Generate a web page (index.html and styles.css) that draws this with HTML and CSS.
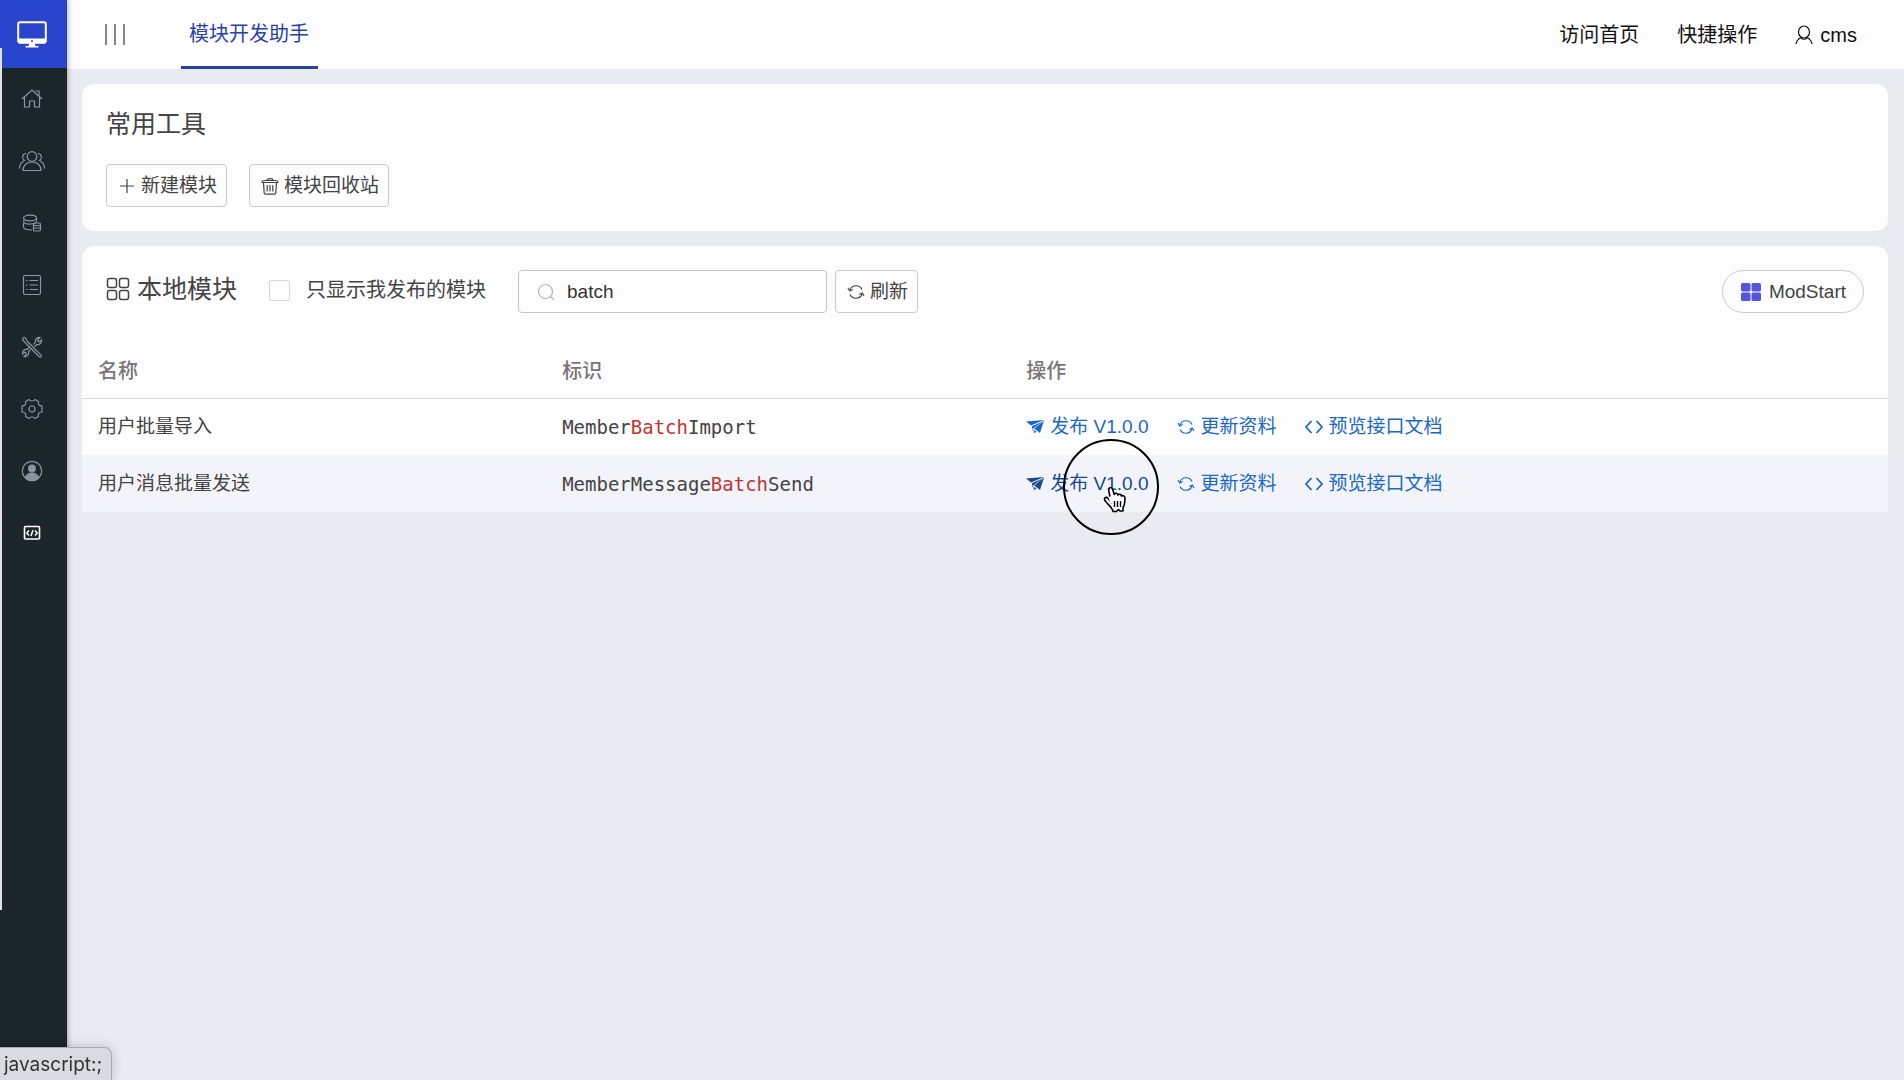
FILE: index.html
```html
<!DOCTYPE html>
<html lang="zh-CN">
<head>
<meta charset="utf-8">
<title>模块开发助手</title>
<link rel="stylesheet" href="styles.css">
</head>
<body>
<svg class="defs" aria-hidden="true">
  <symbol id="i-refresh" viewBox="0 0 18 18"><path d="M3 7a6.5 6.5 0 0 1 12-.5M15 11a6.500 6.500 0 0 1-12 .5"/><path d="M1 5l1.700 3 3-1.500M17 13l-1.700-3-3 1.500"/></symbol>
  <symbol id="i-plane" viewBox="0 0 18 18"><path fill="currentColor" stroke="none" d="M0 3.500 18 2 5 7.600zM5.800 8.200 16 3.800 7.300 10.500 7.600 15.500zM8.300 10.600 18 2.500 14 15zM8.300 12l2.200 1.300L8.300 15.500z"/></symbol>
  <symbol id="i-code" viewBox="0 0 18 18"><path stroke-width="1.800" d="M6.500 3 1 9l5.500 6M11.500 3 17 9l-5.500 6"/></symbol>
</svg>
<div class="app">
  <aside class="sidebar">
    <a class="logo" href="#" aria-label="控制台">
      <svg width="30" height="27" viewBox="0 0 30 27"><rect x="1.200" y="1.200" width="27.600" height="20" rx="1.500" fill="none" stroke="#fff" stroke-width="2"/><path fill="#fff" d="M1 17.500h28v3.700a1.500 1.500 0 0 1-1.500 1.500h-25A1.500 1.500 0 0 1 1 21.200zM12.500 22h5l1 3h3v1.500h-13V25h3z"/><circle cx="15" cy="20" r="1" fill="#2a45cd"/></svg>
    </a>
    <nav class="menu">
      <a href="#" aria-label="首页"><svg class="icon" width="22" height="22" viewBox="0 0 22 22"><path d="M1 11 11 2l10 9M3.500 9v10h5v-6h5v6h5V9M14.500 3H18v5"/></svg></a>
      <a href="#" aria-label="用户"><svg class="icon" width="28" height="22" viewBox="0 0 28 22"><circle cx="14" cy="6.500" r="4.800"/><path d="M5 20.500c0-5.500 4-8.500 9-8.500s9 3 9 8.500zM8 3.500C3.500 4 4 9 6.500 10.500 3 12 1.500 14.500 1.500 18.500M20 3.500c4.500.5 4 5.500 1.500 7 3.500 1.500 5 4 5 8"/></svg></a>
      <a href="#" aria-label="数据"><svg class="icon" width="20" height="18" viewBox="0 0 20 18"><ellipse cx="8" cy="4" rx="6.500" ry="2.800"/><path d="M1.500 6.500c0 5 9 4 12.500 2M1.500 9v4c0 2 3.500 3 8.500 3M14.500 4v4"/><rect x="11.500" y="9" width="7" height="8" rx="1.500"/><path d="M11.500 11.500h7M11.500 14h7"/></svg></a>
      <a href="#" aria-label="列表"><svg class="icon" width="20" height="22" viewBox="0 0 20 22"><rect x="1.500" y="1.500" width="17" height="19" rx="1.500"/><path d="M4 6.500h1.500M7.500 6.500H16M4 11h1.500M7.500 11H16M4 15.500h1.500M7.500 15.500H16"/></svg></a>
      <a href="#" aria-label="工具"><svg class="icon" width="22" height="22" viewBox="0 0 22 22"><path d="m12.500 8.500 2-2.500c-.5-3 1.500-5 4.500-4.500l-2.500 2.500 1.500 2 2.500-2c.5 3-2 5-4.500 4.500l-2.500 2M9.500 13.500l-2 2.500c.5 3-1.500 5-4.500 4.500l2.500-2.500-1.500-2-2.500 2c-.5-3 2-5 4.500-4.500l2-2M1.500 3.500c.3-1.500 1.200-2.200 2.500-2l3 4.500 13 13c1 2-.5 2.500-2 1.500l-13-13z"/></svg></a>
      <a href="#" aria-label="设置"><svg class="icon" width="22" height="22" viewBox="0 0 22 22"><circle cx="11" cy="11" r="3"/><path d="M8 1.500c1 2 5 2 6 0l3.500 2c-1 2.500.5 4.500 3.500 4.500v6c-3 0-4.500 2-3.500 4.500l-3.500 2c-1-2-5-2-6 0l-3.500-2C5.500 16 4 14 1 14V8c3 0 4.500-2 3.500-4.500z"/></svg></a>
      <a href="#" aria-label="账户"><svg class="icon" width="22" height="22" viewBox="0 0 22 22"><circle cx="11" cy="11" r="9.700"/><circle cx="11" cy="8.500" r="3.300" fill="currentColor"/><path fill="currentColor" d="M4.500 17.500c1-3 3.500-4.500 6.500-4.500s5.500 1.500 6.500 4.500c-3.500 4-9.500 4-13 0z"/></svg></a>
      <a class="current" href="#" aria-label="模块开发"><svg class="icon" width="18" height="16" viewBox="0 0 18 16"><rect x="1.500" y="1.500" width="15" height="12.500" rx="1" stroke-width="1.600"/><path stroke-width="1.500" d="M6 5.500 3.800 8 6 10.500M12 5.500 14.200 8 12 10.500M10 5l-2 6"/></svg></a>
    </nav>
  </aside>

  <div class="page">
    <header class="topbar">
      <button class="collapse" type="button" aria-label="折叠菜单"><i></i><i></i><i></i></button>
      <a class="tab" href="#">模块开发助手</a>
      <nav class="links">
        <a href="#">访问首页</a>
        <a href="#">快捷操作</a>
        <a href="#"><svg class="icon" width="18" height="20" viewBox="0 0 18 20"><ellipse cx="9" cy="7" rx="5.500" ry="6"/><path d="M1 19c.5-3.500 2-5 5-6.500M17 19c-.5-3.500-2-5-5-6.500M6 13.500c2 1 4 1 6 0"/></svg>cms</a>
      </nav>
    </header>

    <main class="content">
      <section class="card tools">
        <h2>常用工具</h2>
        <div class="buttons">
          <button class="btn" type="button"><svg class="icon" width="18" height="18" viewBox="0 0 18 18"><path d="M9 2v14M2 9h14"/></svg>新建模块</button>
          <button class="btn" type="button"><svg class="icon" width="18" height="18" viewBox="0 0 18 18"><path d="M1 5.500C1 4 2 3.500 3.500 3.500h11c1.500 0 2.500.5 2.500 2zM6 3.500c0-2.500 6-2.500 6 0M2.500 5.500l.7 10.500c0 .8.500 1.200 1.300 1.200h9c.8 0 1.300-.4 1.300-1.200l.7-10.500M6.200 8v6.500M9 8v6.500M11.800 8v6.500"/></svg>模块回收站</button>
        </div>
      </section>

      <section class="card modules">
        <div class="toolbar">
          <h2><svg class="icon" width="24" height="24" viewBox="0 0 24 24"><g stroke-width="1.500"><rect x="1.500" y="1.500" width="9" height="9" rx="2"/><rect x="13.500" y="1.500" width="9" height="9" rx="2"/><rect x="1.500" y="13.500" width="9" height="9" rx="2"/><rect x="13.500" y="13.500" width="9" height="9" rx="2"/></g></svg>本地模块</h2>
          <label class="mine"><input type="checkbox">只显示我发布的模块</label>
          <div class="query">
            <label class="search"><svg class="icon" width="18" height="18" viewBox="0 0 18 18"><circle cx="8.500" cy="8.500" r="7"/><path d="m13.500 13.500 3.500 3.500"/></svg><input type="text" value="batch" aria-label="搜索模块"></label>
            <button class="btn" type="button"><svg class="icon" width="18" height="18"><use href="#i-refresh"/></svg>刷新</button>
          </div>
          <button class="btn pill" type="button"><svg width="20" height="18" viewBox="0 0 20 18" fill="#5456dc"><rect width="9.500" height="8.500" rx="1.500"/><rect x="10.500" width="9.500" height="8.500" rx="1.500"/><rect y="9.500" width="9.500" height="8.500" rx="1.500"/><rect x="10.500" y="9.500" width="9.500" height="8.500" rx="1.500"/></svg>ModStart</button>
        </div>
        <table>
          <colgroup><col class="col-name"><col class="col-id"><col></colgroup>
          <thead><tr><th>名称</th><th>标识</th><th>操作</th></tr></thead>
          <tbody>
            <tr>
              <td>用户批量导入</td>
              <td class="code">Member<mark>Batch</mark>Import</td>
              <td><div class="actions">
                <a href="#"><svg class="icon" width="18" height="18"><use href="#i-plane"/></svg>发布 V1.0.0</a>
                <a href="#"><svg class="icon" width="18" height="18"><use href="#i-refresh"/></svg>更新资料</a>
                <a href="#"><svg class="icon" width="18" height="18"><use href="#i-code"/></svg>预览接口文档</a>
              </div></td>
            </tr>
            <tr class="hover">
              <td>用户消息批量发送</td>
              <td class="code">MemberMessage<mark>Batch</mark>Send</td>
              <td><div class="actions">
                <a class="active" href="#"><svg class="icon" width="18" height="18"><use href="#i-plane"/></svg>发布 V1.0.0
                  <span class="pointer"><svg width="24" height="28" viewBox="0 0 24 28"><path fill="#fff" stroke="#000" stroke-width="1.600" stroke-linejoin="round" d="M8.500 17 6 6C5.500 3 6 1.500 7.500 1.500S9.700 3 10 4.500l1.300 4C11.800 6.700 14.500 6.700 15 9c1-1.200 3.200-.8 3.500 1 1.500-1 3.500 0 3.500 2.500 0 4-.3 6.500-2 9.500v3h-3l-1.500-1.500L13.500 25.500h-3.500c-.3-3.500-4-6-6-8.500-1.500-1.800-3-3-2.500-4.500S4 11 5.200 12.500z"/><path fill="#fff" d="M5.500 11.500 8 10l2 7-2.500 1z"/><path stroke="#000" stroke-width="1.400" d="M11.500 15v6M14.500 15v6M17.500 15v6"/></svg></span>
                </a>
                <a href="#"><svg class="icon" width="18" height="18"><use href="#i-refresh"/></svg>更新资料</a>
                <a href="#"><svg class="icon" width="18" height="18"><use href="#i-code"/></svg>预览接口文档</a>
              </div></td>
            </tr>
          </tbody>
        </table>
      </section>
    </main>
  </div>
</div>
<div class="edge"></div>
<div class="status">javascript:;</div>
</body>
</html>
```

FILE: styles.css
```css
* { box-sizing: border-box; }

body {
  margin: 0;
  background: #e8ecf1;
  color: #444;
  font: 19px/28px "Liberation Sans", "Noto Sans CJK SC", sans-serif;
}

a { color: inherit; text-decoration: none; }
button, input { font: inherit; color: inherit; margin: 0; }

h2 {
  display: flex;
  align-items: center;
  gap: 7px;
  margin: 0;
  font-size: 25px;
  line-height: 32px;
  font-weight: 400;
}

.defs { position: absolute; width: 0; height: 0; }
.icon { flex: none; fill: none; stroke: currentColor; stroke-width: 1.2; }

.app { display: flex; min-height: 100vh; }

/* Sidebar */
.sidebar {
  flex: none;
  width: 67px;
  background: #1b252a;
  box-shadow: 0 0 6px rgba(0, 0, 0, .4);
  z-index: 1;
}
.logo {
  display: flex;
  height: 68px;
  align-items: center;
  justify-content: center;
  padding-right: 4px;
  background: #2a45cd;
}
.menu a {
  display: flex;
  height: 62px;
  align-items: center;
  justify-content: center;
  padding-right: 4px;
  color: #8a979e;
}
.menu .current { color: #fff; }

/* Top bar */
.page { flex: 1; min-width: 0; }
.topbar {
  display: flex;
  height: 69px;
  align-items: stretch;
  padding: 0 47px 0 38px;
  background: #fdfdfe;
  font-size: 20px;
}
.collapse {
  display: flex;
  align-items: center;
  gap: 7px;
  padding: 0;
  margin-right: 56px;
  border: 0;
  background: none;
}
.collapse i { width: 2px; height: 21px; background: #85868a; }
.tab {
  padding: 20px 9px 0 8px;
  border-bottom: 3px solid #2941a8;
  color: #2941a8;
}
.links {
  display: flex;
  align-items: center;
  gap: 38px;
  margin-left: auto;
  color: #111;
}
.links a { display: flex; align-items: center; gap: 7px; }

/* Cards */
.content { display: grid; gap: 15px; padding: 15px 16px 15px 15px; }
.card { background: #fdfdfe; border-radius: 12px; }
.tools { padding: 24px; }
.buttons { display: flex; gap: 22px; margin-top: 24px; }

.btn {
  display: flex;
  height: 43px;
  align-items: center;
  gap: 5px;
  padding: 0 9px 0 11px;
  border: 1px solid #c8cad2;
  border-radius: 4px;
  background: none;
}
.pill { margin-left: auto; padding: 0 17px 0 18px; gap: 8px; border-radius: 22px; }

.modules { border-radius: 12px 12px 0 0; }
.toolbar {
  display: flex;
  align-items: center;
  gap: 32px;
  padding: 24px 24px 28px;
}
.toolbar h2 { padding-bottom: 6px; }
.mine { display: flex; align-items: center; gap: 16px; padding-bottom: 3px; font-size: 20px; }
.mine input {
  appearance: none;
  width: 21px;
  height: 21px;
  border: 1px solid #d5d7dd;
  border-radius: 2px;
}
.query { display: flex; gap: 8px; }
.search {
  display: flex;
  width: 309px;
  height: 43px;
  align-items: center;
  gap: 12px;
  padding: 0 18px;
  border: 1px solid #c2c3d6;
  border-radius: 4px;
}
.search .icon { color: #b4b6bd; }
.search input {
  flex: 1;
  min-width: 0;
  padding: 0;
  border: 0;
  outline: 0;
  background: none;
  color: #333;
}

/* Module table */
table { width: 100%; border-collapse: collapse; table-layout: fixed; }
.col-name, .col-id { width: 25.7%; }
th, td { height: 57px; padding: 0 16px; text-align: left; }
th { padding-top: 3px; border-bottom: 1px solid #dcdde3; color: #777; font-size: 20px; font-weight: 500; }
.hover { background: #f3f4fa; }
.code { font-family: "DejaVu Sans Mono", monospace; }
mark { background: none; color: #bf3535; }
.actions { display: flex; gap: 28px; }
.actions a {
  position: relative;
  display: flex;
  align-items: center;
  gap: 6px;
  color: #1c68c8;
  white-space: nowrap;
}
.actions .active { color: #174a8c; }

/* Pointer with its click ring */
.pointer {
  position: absolute;
  left: 37px;
  top: -31px;
  width: 96px;
  height: 96px;
  border: 2px solid #000;
  border-radius: 50%;
}
.pointer svg { position: absolute; left: 38px; top: 45px; }

/* Browser window overlays */
.edge {
  position: fixed;
  left: 0;
  top: 48px;
  bottom: 170px;
  width: 2px;
  background: #dfe3e2;
  z-index: 2;
}
.status {
  position: fixed;
  left: 0;
  bottom: 0;
  padding: 3px 9px 1px 4px;
  border: 1px solid #a9abb0;
  border-width: 1px 1px 0 0;
  border-radius: 0 8px 0 0;
  background: #d9dbe0;
  box-shadow: 0 0 12px rgba(0, 0, 0, .2);
  color: #333;
  font-family: Inter, sans-serif;
  font-size: 19px;
  z-index: 2;
}
```
